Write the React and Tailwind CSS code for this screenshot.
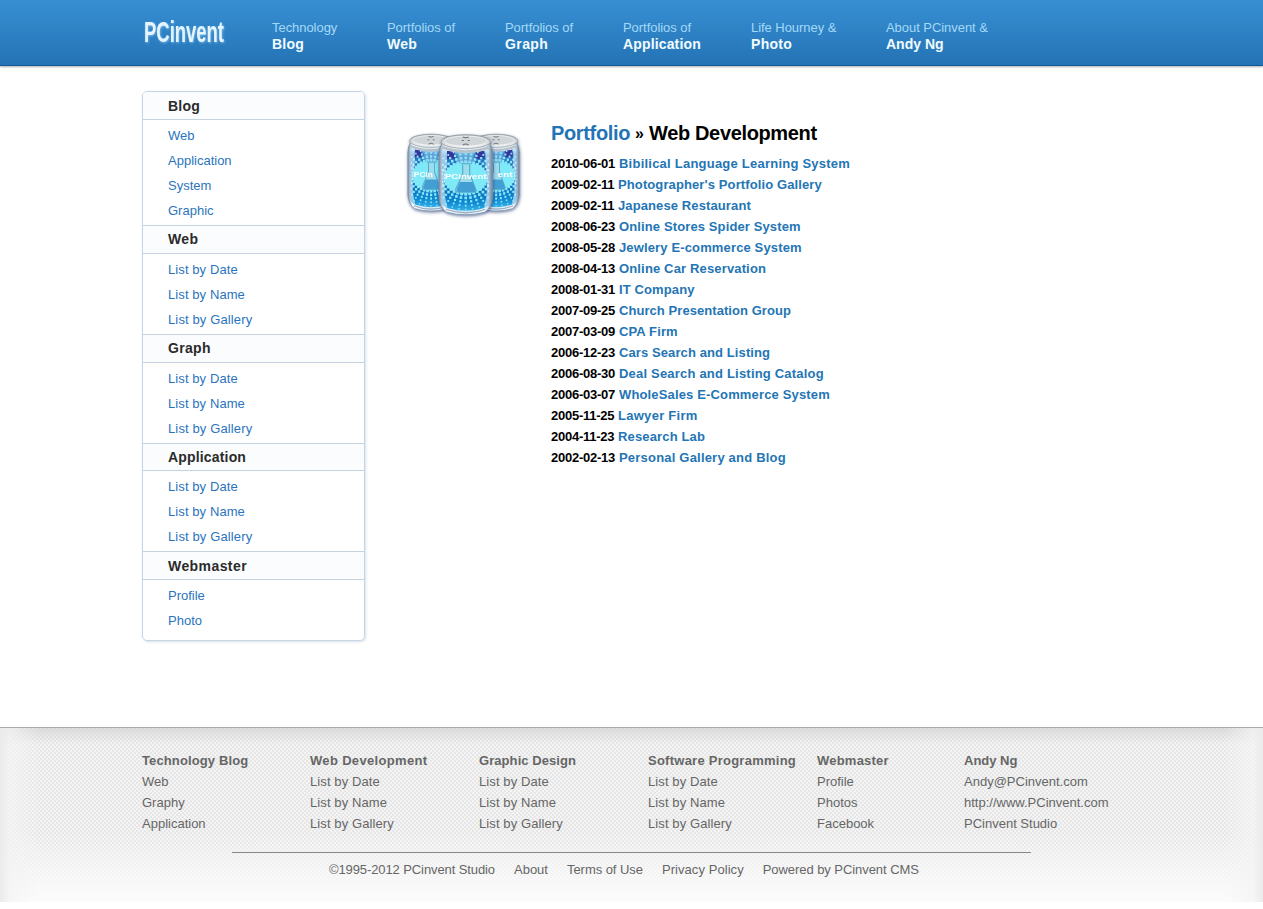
const nav = [
  ['Technology', 'Blog', 'w-[115px]', 'tracking-[0.2px]'],
  ['Portfolios of', 'Web', 'w-[118px]', 'tracking-[0.3px]'],
  ['Portfolios of', 'Graph', 'w-[118px]', 'tracking-[0.4px]'],
  ['Portfolios of', 'Application', 'w-[128px]', 'tracking-[0.15px]'],
  ['Life Hourney &', 'Photo', 'w-[135px]', 'tracking-[0.3px]'],
  ['About PCinvent &', 'Andy Ng', 'w-[120px]', ''],
];

const lists = ['List by Date', 'List by Name', 'List by Gallery'];
const sections = [
  ['Blog', ['Web', 'Application', 'System', 'Graphic'], 'h-[28px] leading-[29px] tracking-[0.2px]', 'h-[105px]'],
  ['Web', lists, 'h-[29px] leading-[27px] tracking-[0.4px]', 'h-[80px]'],
  ['Graph', lists, 'h-[29px] leading-[27px] tracking-[0.3px]', 'h-[80px]'],
  ['Application', lists, 'h-[28px] leading-[27px] tracking-[0.17px]', 'h-[80px]'],
  ['Webmaster', ['Profile', 'Photo'], 'h-[29px] leading-[28px] tracking-[0.42px]', 'h-[60px]'],
];

const projects = [
  ['2010-06-01', 'Bibilical Language Learning System', 'tracking-[0.23px]'],
  ['2009-02-11', "Photographer's Portfolio Gallery", 'tracking-[0.11px] -ml-px'],
  ['2009-02-11', 'Japanese Restaurant', 'tracking-[0.11px] -ml-px'],
  ['2008-06-23', 'Online Stores Spider System', 'tracking-[0.12px]'],
  ['2008-05-28', 'Jewlery E-commerce System', 'tracking-[0.14px]'],
  ['2008-04-13', 'Online Car Reservation', 'tracking-[0.15px]'],
  ['2008-01-31', 'IT Company', 'tracking-[0.12px]'],
  ['2007-09-25', 'Church Presentation Group', 'tracking-[0.06px]'],
  ['2007-03-09', 'CPA Firm', 'tracking-[0.12px]'],
  ['2006-12-23', 'Cars Search and Listing', 'tracking-[0.1px]'],
  ['2006-08-30', 'Deal Search and Listing Catalog', 'tracking-[0.2px]'],
  ['2006-03-07', 'WholeSales E-Commerce System', 'tracking-[0.15px]'],
  ['2005-11-25', 'Lawyer Firm', 'tracking-[0.28px] -ml-px'],
  ['2004-11-23', 'Research Lab', 'tracking-[0.15px] -ml-px'],
  ['2002-02-13', 'Personal Gallery and Blog', 'tracking-[0.2px]'],
];

const footer = [
  ['Technology Blog', ['Web', 'Graphy', 'Application'], 'w-[168px]', 'tracking-[0.12px]'],
  ['Web Development', lists, 'w-[169px]', 'tracking-[0.33px]'],
  ['Graphic Design', lists, 'w-[169px]', 'tracking-[0.07px]'],
  ['Software Programming', lists, 'w-[169px]', 'tracking-[0.25px]'],
  ['Webmaster', ['Profile', 'Photos', 'Facebook'], 'w-[147px]', 'tracking-[0.22px]'],
  ['Andy Ng', ['Andy@PCinvent.com', 'http://www.PCinvent.com', 'PCinvent Studio'], 'w-[160px]', ''],
];

const dots = [];
for (let ring = 0; ring < 5; ring++) {
  for (let i = 0; i < 32; i++) {
    const a = (i * Math.PI) / 16;
    dots.push([28 + Math.cos(a) * (21 + ring * 3.6), 44 + Math.sin(a) * (16 + ring * 3.8), 1.5 - ring * 0.2]);
  }
}

function Can({ transform, text, x, length }) {
  return (
    <g transform={transform}>
      <path d="M5 8 Q1 14 1 20 V64 Q2 74 9 78 Q28 83 47 78 Q54 74 55 64 V20 Q55 14 51 8Z" fill="url(#metal)" stroke="#7890a9" strokeWidth=".8" />
      <g clipPath="url(#label)">
        <rect x="4" y="16" width="48" height="62" fill="url(#blue)" />
        <rect x="9" y="17" width="8" height="8" fill="#35359b" />
        <rect x="38" y="17" width="9" height="8" fill="#35359b" />
        {dots.map(([cx, cy, r], i) => <rect key={i} x={cx - r} y={cy - r} width={r * 2} height={r * 2} fill="#8beafa" />)}
        <ellipse cx="28" cy="44" rx="21" ry="15.5" fill="#7eeaf8" />
        <path d="M20 17 H36 V29 H20Z" fill="#9ad3ee" opacity=".45" />
        <path d="M23 30 H34 M25 31 V40 L18 55 Q17 58 21 58 H36 Q40 58 38 55 L32 40 V31" fill="#9cdcec" stroke="#5aa6c8" strokeWidth="1.1" />
        <path d="M22 48 H35 L38 55 Q39 58 36 58 H21 Q18 58 19 55Z" fill="#429fd4" />
        <path d="M4 16 H9 V32 Q6 44 7 62 L10 76 H4Z M52 16 H48 V32 Q50 44 49 62 L46 76 H52Z" fill="#d8f3fb" opacity=".65" />
        <text x={x} y="45.5" fontSize="6.5" fontWeight="bold" fill="#fff" textLength={length} lengthAdjust="spacingAndGlyphs" fontFamily="Liberation Sans, sans-serif">{text}</text>
      </g>
      <path d="M4 12 Q28 21 52 12 V15 Q28 23 4 15Z" fill="#b9c2cb" />
      <ellipse cx="28" cy="8" rx="25" ry="6.8" fill="url(#lid)" stroke="#90999f" strokeWidth=".8" />
      <ellipse cx="28" cy="7.5" rx="21.5" ry="5" fill="#d0d5d8" stroke="#f7f9fa" strokeWidth=".8" />
      <path d="M25 3.5 Q28 5 31 3.5 M25 11.5 Q28 9.5 31 11.5 M24 7 H26 M30 7 H32" stroke="#667078" strokeWidth="1" fill="none" />
      <path d="M8 75 Q28 82 48 75" stroke="#9aa9bd" strokeWidth="1.2" fill="none" />
    </g>
  );
}

function Cans() {
  return (
    <svg width="128" height="98" viewBox="0 0 128 98" className="block">
      <defs>
        <linearGradient id="metal">
          <stop offset="0" stopColor="#758da8" />
          <stop offset=".1" stopColor="#f3faff" />
          <stop offset=".5" stopColor="#d4eaf5" />
          <stop offset=".88" stopColor="#f2faff" />
          <stop offset="1" stopColor="#677f9c" />
        </linearGradient>
        <linearGradient id="blue" x2="0" y2="1">
          <stop offset="0" stopColor="#a1d8ef" />
          <stop offset=".1" stopColor="#2f7dc8" />
          <stop offset=".5" stopColor="#0759ad" />
          <stop offset=".85" stopColor="#118bd3" />
          <stop offset="1" stopColor="#3cb8ea" />
        </linearGradient>
        <linearGradient id="lid" x2="0" y2="1">
          <stop offset="0" stopColor="#a5adb3" />
          <stop offset="1" stopColor="#f5f7f8" />
        </linearGradient>
        <clipPath id="label"><path d="M4 16 Q28 22 52 16 V68 Q50 73 46 74 Q28 79 10 74 Q5 72 4 68Z" /></clipPath>
        <filter id="shade" x="-20%" y="-20%" width="140%" height="140%">
          <feDropShadow dx=".5" dy="1.2" stdDeviation="1.4" floodColor="#33457a" floodOpacity=".7" />
        </filter>
      </defs>
      <g filter="url(#shade)">
        <Can transform="translate(7 5) scale(.86 .97)" text="PCin" x="8" length="22" />
        <Can transform="translate(72 5) scale(.86 .97)" text="ent" x="30" length="17" />
      </g>
      <g filter="url(#shade)"><Can transform="translate(38 5.5) scale(.99 1.01)" text="PCinvent" x="7" length="42" /></g>
    </svg>
  );
}

export default function App() {
  return (
    <div className="flex h-[909px] w-full flex-col overflow-hidden bg-white font-['Liberation_Sans',Arial,sans-serif] text-[13px]">
      <header className="z-10 h-[66px] shrink-0 border-b border-[#145a94] bg-linear-to-b from-[#3790d3] to-[#2473b5] shadow-[0_1px_2px_#a9adb3]">
        <div className="flex pl-[144px]">
          <div className="w-[128px] pt-[15px]">
            <div className="origin-left scale-x-[0.615] whitespace-nowrap text-[30px] leading-[34px] font-bold text-[#e4f5ff] [text-shadow:1px_1px_3px_#7fb8e6]">PCinvent</div>
          </div>
          <nav className="flex pt-[20px]">
            {nav.map(([top, bottom, width, spacing], i) => (
              <a key={i} className={`block shrink-0 whitespace-nowrap ${width}`}>
                <span className="block leading-[16px] tracking-[-0.05px] text-[#a3d9f8]">{top}</span>
                <span className={`block text-[14px] leading-[16px] font-bold text-[#f2fcff] ${spacing}`}>{bottom}</span>
              </a>
            ))}
          </nav>
        </div>
      </header>

      <main className="flex h-[661px] shrink-0 items-start pt-[25px] pl-[142px]">
        <aside className="h-[550px] w-[223px] overflow-hidden rounded-[5px] border border-[#c5d3e2] shadow-[1px_1px_3px_#d9e0e8]">
          {sections.map(([title, items, head, body], i) => (
            <section key={title}>
              <h2 className={`border-b border-[#c5d3e0] bg-[#fafcfe] pl-[25px] text-[14px] font-bold text-[#2b2b2b] ${i ? 'border-t' : ''} ${head}`}>{title}</h2>
              <ul className={`pt-[3px] pl-[25px] ${body}`}>
                {items.map((item) => <li key={item} className={`h-[25px] leading-[25px] text-[#2b74bd] ${item === 'List by Gallery' ? 'tracking-[0.13px]' : item.startsWith('List') ? 'tracking-[0.09px]' : ''}`}>{item}</li>)}
              </ul>
            </section>
          ))}
        </aside>
        <div className="ml-[35px] pt-[37px]"><Cans /></div>
        <div className="ml-[23px] pt-[30px]">
          <h1 className="flex text-[20px] leading-[24px] font-bold whitespace-nowrap text-black">
            <span className="w-[84px] tracking-[-0.35px] text-[#2374b7]">Portfolio</span>
            <span className="w-[14px] pt-px text-[16px]">»</span>
            <span className="tracking-[-0.35px]">Web Development</span>
          </h1>
          <ul className="mt-[7px]">
            {projects.map(([date, name, spacing]) => (
              <li key={name} className="flex h-[21px] leading-[21px] font-bold whitespace-nowrap">
                <span className="w-[68px] tracking-[-0.25px] text-black">{date}</span>
                <a className={`text-[#2475b5] ${spacing}`}>{name}</a>
              </li>
            ))}
          </ul>
        </div>
      </main>

      <footer className="h-[175px] shrink-0 border-t border-[#aaa] bg-[linear-gradient(to_right,#ebebeb_0,rgba(244,244,244,0.75)_10px,transparent_40px,transparent_calc(100%-40px),rgba(244,244,244,0.75)_calc(100%-10px),#ebebeb),linear-gradient(to_bottom,rgba(205,205,205,0.6)_0,transparent_16px,transparent_105px,rgba(250,250,250,0.7)_145px,#fcfcfc_174px),repeating-conic-gradient(#e6e6e6_0_25%,#f4f4f4_0_50%)] bg-size-[100%_100%,100%_100%,4px_4px] pt-[22px] text-[#666]">
        <div className="flex pl-[142px]">
          {footer.map(([title, items, width, spacing]) => (
            <div key={title} className={`shrink-0 whitespace-nowrap leading-[21px] ${width}`}>
              <h3 className={`font-bold ${spacing}`}>{title}</h3>
              {items.map((item) => <a key={item} className={`block ${item.startsWith('List') ? 'tracking-[0.1px]' : ''}`}>{item}</a>)}
            </div>
          ))}
        </div>
        <div className="mt-[18px] ml-[232px] w-[799px] border-t border-[#888]" />
        <div className="mt-[6px] flex gap-[19px] pl-[329px] leading-[21px] whitespace-nowrap">
          <span className="tracking-[-0.1px]">©1995-2012 PCinvent Studio</span>
          <a>About</a>
          <a className="tracking-[-0.05px]">Terms of Use</a>
          <a className="tracking-[0.06px]">Privacy Policy</a>
          <a className="tracking-[-0.06px]">Powered by PCinvent CMS</a>
        </div>
      </footer>
    </div>
  );
}
